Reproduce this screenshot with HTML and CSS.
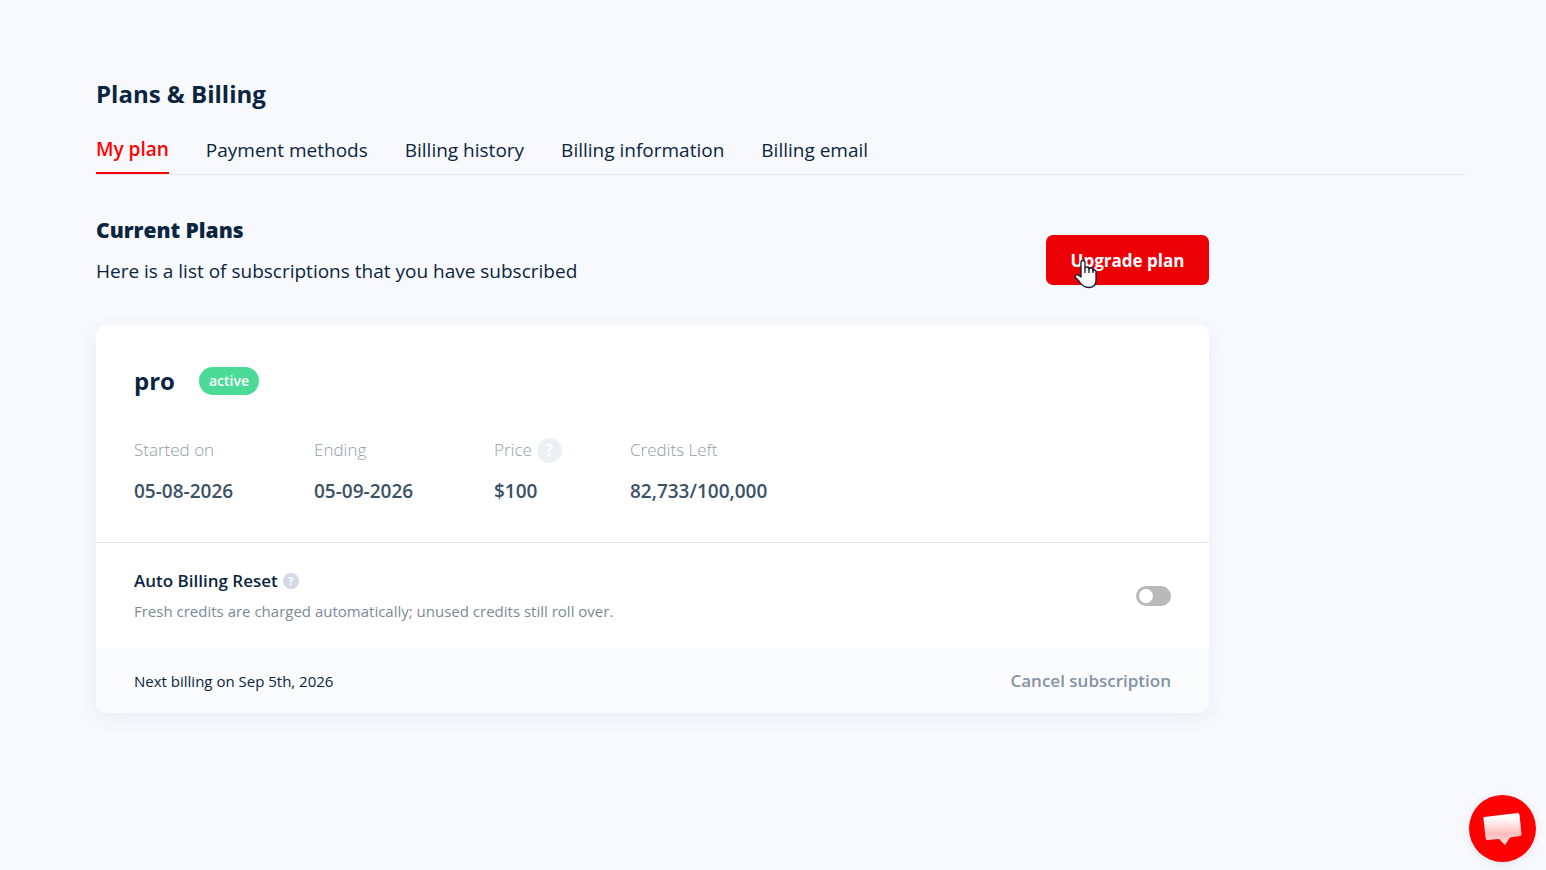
FILE: index.html
```
<!DOCTYPE html>
<html lang="en">
<head>
  <meta charset="UTF-8" />
  <meta name="viewport" content="width=device-width, initial-scale=1.0"/>
  <title>Plans &amp; Billing</title>
  <link rel="stylesheet" href="styles.css">
</head>
<body>
  <main class="page">
    <h1>Plans &amp; Billing</h1>

    <nav class="tabs">
      <a class="tab active" href="#plan">My plan</a>
      <a class="tab" href="#payment">Payment methods</a>
      <a class="tab" href="#history">Billing history</a>
      <a class="tab" href="#information">Billing information</a>
      <a class="tab" href="#email">Billing email</a>
    </nav>

    <section class="plans" id="plan">
      <div class="plans-header">
        <div>
          <h2>Current Plans</h2>
          <p class="intro">Here is a list of subscriptions that you have subscribed</p>
        </div>
        <button class="upgrade-btn" type="button">
          Upgrade plan
          <svg class="pointer" width="24" height="31" viewBox="0 0 24 31" aria-hidden="true">
            <path d="M7 18V3.500Q7 1.500 9 1.500T11 3.500V9Q11 8 13 8T15 9V10Q15 9 17 9T19 11V12Q19 11 20.500 11T22 13V21C22 25 20 28.500 14.500 28.500C9 28.500 7 25 5 22L1.500 18.500C.5 16.500 3 14.500 5 16.500Z" fill="#fff" stroke="#10192f" stroke-width="1.300" stroke-linejoin="round"/>
            <path d="M11 9V14M15 9V14M19 11V14" fill="none" stroke="#10192f" stroke-width="1.300"/>
          </svg>
        </button>
      </div>

      <article class="card">
        <div class="card-main">
          <div class="plan-title">
            <h3>pro</h3>
            <span class="badge">active</span>
          </div>
          <dl class="details">
            <div class="detail">
              <dt>Started on</dt>
              <dd>05-08-2026</dd>
            </div>
            <div class="detail">
              <dt>Ending</dt>
              <dd>05-09-2026</dd>
            </div>
            <div class="detail detail-price">
              <dt>Price <button class="help" type="button" aria-label="About the price">?</button></dt>
              <dd>$100</dd>
            </div>
            <div class="detail">
              <dt>Credits Left</dt>
              <dd>82,733/100,000</dd>
            </div>
          </dl>
        </div>

        <div class="card-reset">
          <div>
            <div class="reset-title">
              <label for="autoReset">Auto Billing Reset</label>
              <button class="help help-small" type="button" aria-label="About auto billing reset">?</button>
            </div>
            <p class="reset-text">Fresh credits are charged automatically; unused credits still roll over.</p>
          </div>
          <input class="switch" id="autoReset" type="checkbox" role="switch">
        </div>

        <div class="card-footer">
          <span>Next billing on Sep 5th, 2026</span>
          <button class="cancel-btn" type="button">Cancel subscription</button>
        </div>
      </article>
    </section>
  </main>

  <button class="chat" type="button" aria-label="Open chat">
    <svg width="40" height="34" viewBox="0 0 40 34" aria-hidden="true">
      <defs>
        <linearGradient id="bubble" x1="0" y1="0" x2="0" y2="1">
          <stop offset="0.15" stop-color="#fff"/>
          <stop offset="0.65" stop-color="#ffbcbc"/>
          <stop offset="1" stop-color="#ffe0e0"/>
        </linearGradient>
      </defs>
      <path d="M1 5L35 1Q36 1 36.500 3L38.500 22Q38.500 24 37 24L27 25.500L22 33L16 27L4 28Q3 28 2.500 26L.5 7Q.3 5 1 5Z" fill="url(#bubble)"/>
    </svg>
  </button>
</body>
</html>
```
FILE: styles.css
```
* {
  box-sizing: border-box;
}

body {
  margin: 0;
  background-color: #f8f9fd;
  color: #0a2540;
  font-family: "Segoe UI", "Open Sans", "Noto Sans", sans-serif;
  font-size: 19px;
  line-height: 28px;
}

h1, h2, h3, p, dl, dd {
  margin: 0;
}

button {
  border: none;
  padding: 0;
  font-family: inherit;
  cursor: pointer;
}

.page {
  padding: 76px 81px 76px 96px;
}

h1 {
  font-size: 24px;
  line-height: 36px;
  font-weight: 700;
}

.tabs {
  display: flex;
  gap: 37px;
  margin-top: 22px;
  border-bottom: 1px solid #e4e7ef;
}

.tab {
  padding: 2px 0 10px;
  color: inherit;
  text-decoration: none;
}

.tab.active {
  padding: 1px 0 9px;
  border-bottom: 2px solid #ff0000;
  color: #ff0000;
  font-weight: 600;
}

.plans {
  max-width: 1113px;
}

.plans-header {
  display: flex;
  justify-content: space-between;
  align-items: flex-end;
  margin-top: 38px;
}

h2 {
  font-size: 21px;
  line-height: 34px;
  font-weight: 800;
}

.intro {
  margin-top: 10px;
}

.upgrade-btn {
  position: relative;
  width: 163px;
  height: 50px;
  border-radius: 7px;
  background-color: #eb0006;
  color: #ffffff;
  font-size: 17px;
  font-weight: 700;
}

.pointer {
  position: absolute;
  left: 28px;
  top: 24px;
}

.card {
  margin-top: 40px;
  border-radius: 10px;
  background-color: #ffffff;
  box-shadow: 0 5px 20px rgba(30, 50, 90, 0.06);
  overflow: hidden;
}

.card-main {
  padding: 38px 38px 36px;
  border-bottom: 1px solid #e4e5f0;
}

.plan-title {
  display: flex;
  align-items: center;
  gap: 24px;
}

h3 {
  font-size: 24px;
  line-height: 36px;
  font-weight: 700;
}

.badge {
  padding: 0 10px;
  border-radius: 14px;
  background-color: #4bdb97;
  color: #ffffff;
  font-size: 14px;
  font-weight: 600;
}

.details {
  display: flex;
  margin-top: 36px;
}

.detail {
  min-width: 180px;
}

.detail-price {
  min-width: 136px;
}

dt {
  display: flex;
  align-items: center;
  gap: 5px;
  height: 30px;
  color: #919dab;
  font-size: 17px;
  font-weight: 300;
}

dd {
  margin-top: 11px;
  line-height: 30px;
  color: #3b5165;
  font-weight: 600;
}

.help {
  width: 25px;
  height: 25px;
  border-radius: 50%;
  background-color: #ebf0f3;
  color: #ffffff;
  font-size: 16px;
  line-height: 25px;
  font-weight: 700;
}

.card-reset {
  display: flex;
  justify-content: space-between;
  align-items: center;
  padding: 23px 38px 22px;
}

.reset-title {
  display: flex;
  align-items: center;
  gap: 5px;
  font-size: 17px;
  line-height: 30px;
  font-weight: 600;
}

.help-small {
  width: 16px;
  height: 16px;
  background-color: #d5d8e5;
  font-size: 11px;
  line-height: 16px;
}

.reset-text {
  line-height: 30px;
  color: #7b8a99;
  font-size: 15px;
}

.switch {
  appearance: none;
  flex: none;
  width: 35px;
  height: 20px;
  margin: 0;
  padding: 3px;
  border-radius: 10px;
  background-color: #b9b9b9;
  cursor: pointer;
}

.switch::before {
  content: "";
  display: block;
  width: 14px;
  height: 14px;
  border-radius: 50%;
  background-color: #ffffff;
}

.switch:checked {
  padding-left: 18px;
  background-color: #4bdb97;
}

.card-footer {
  display: flex;
  justify-content: space-between;
  align-items: center;
  padding: 19px 38px 18px;
  background-color: #fafbfd;
  font-size: 15px;
}

.cancel-btn {
  background: none;
  color: #8592a5;
  font-size: 17px;
  line-height: 28px;
  font-weight: 600;
}

.chat {
  position: fixed;
  right: 10px;
  bottom: 8px;
  display: flex;
  justify-content: center;
  align-items: center;
  width: 67px;
  height: 67px;
  border-radius: 50%;
  background-color: #ff0000;
  box-shadow: 0 2px 10px rgba(30, 50, 90, 0.1);
}
```
